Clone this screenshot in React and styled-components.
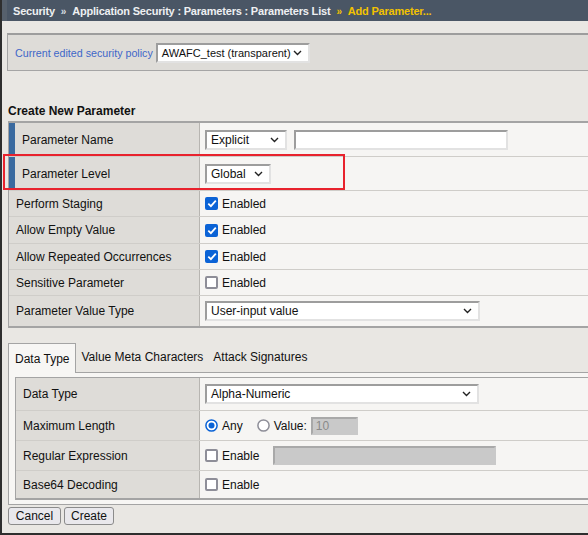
import React from 'react';
import styled, { createGlobalStyle } from 'styled-components';

const GlobalStyle = createGlobalStyle`
  html, body {
    margin: 0;
    padding: 0;
    background: #e9e7e3;
    font-family: "Liberation Sans", Arial, sans-serif;
    font-size: 12px;
    color: #111;
  }
`;

// Page frame with the dark window edges
const Page = styled.div`
  box-sizing: border-box;
  height: 535px;
  border-left: 2px solid #2e2e2e;
  border-bottom: 2px solid #2e2e2e;
  overflow: hidden;
`;

// Breadcrumb header bar
const Header = styled.header`
  display: flex;
  align-items: center;
  height: 21px;
  padding-left: 6px;
  background-color: #4a5665;
  border-left: 5px solid #56606c;
  color: #eef0f2;
  font-size: 11px;
  font-weight: bold;
  letter-spacing: -0.2px;
  white-space: nowrap;
`;

const Sep = styled.span`
  font-size: 10px;
  margin: 2px 6px 0 6px;
  color: ${(p) => (p.$hot ? '#f2c200' : '#d8dce0')};
`;

const Crumb = styled.span`
  color: ${(p) => (p.$hot ? '#f2c200' : '#eef0f2')};
`;

// Current policy bar
const PolicyBar = styled.div`
  display: flex;
  align-items: center;
  gap: 3px;
  box-sizing: border-box;
  height: 38px;
  margin: 12px 0 0 5px;
  padding-left: 7px;
  background-color: #dedcd8;
  border-top: 2px solid #9d9d9d;
  border-left: 1px solid #a5a5a5;
  border-bottom: 1px solid #a5a5a5;
`;

const PolicyLabel = styled.span`
  color: #3f67c8;
  font-size: 10.7px;
  padding-top: 1px;
`;

// Dropdown looking control
const Select = styled.div`
  display: flex;
  align-items: center;
  justify-content: space-between;
  box-sizing: border-box;
  width: ${(p) => p.$w}px;
  height: 20px;
  padding: 0 6px 0 4px;
  background: #fff;
  border: 2px solid;
  border-color: #9d9d9d #e2e2e2 #e2e2e2 #9d9d9d;
  color: #111;
  font-size: ${(p) => p.$fs || 12}px;
  white-space: nowrap;
  & svg {
    flex-shrink: 0;
  }
`;

const TextBox = styled.div`
  box-sizing: border-box;
  width: ${(p) => p.$w}px;
  height: ${(p) => p.$h || 20}px;
  margin-left: ${(p) => p.$ml || 0}px;
  padding-left: 3px;
  display: flex;
  align-items: center;
  background: ${(p) => (p.$disabled ? '#c9c9c9' : '#fff')};
  color: #8a8a8a;
  border: 2px solid;
  border-color: ${(p) =>
    p.$disabled ? '#a9a9a9 #c9c9c9 #c9c9c9 #a9a9a9' : '#9d9d9d #e2e2e2 #e2e2e2 #9d9d9d'};
`;

const Chevron = () => (
  <svg width="9" height="6" viewBox="0 0 9 6">
    <path d="M1 1 L4.5 4.5 L8 1" fill="none" stroke="#222" strokeWidth="1.4" />
  </svg>
);

const SectionTitle = styled.h2`
  margin: 31px 0 0 6px;
  font-size: 12px;
  font-weight: bold;
  line-height: 19px;
`;

const TableWrap = styled.div`
  position: relative;
  margin-left: 6px;
`;

const Grid = styled.div`
  border-top: ${(p) => p.$topW || 2}px solid #a4a4a4;
  border-left: 1px solid #a4a4a4;
  border-bottom: 2px solid #a4a4a4;
`;

const Row = styled.div`
  display: grid;
  grid-template-columns: ${(p) => p.$col}px 1fr;
  box-sizing: border-box;
  height: ${(p) => p.$h}px;
  & + & {
    border-top: 1px solid #cfcdc9;
  }
`;

const Label = styled.div`
  display: flex;
  align-items: center;
  padding-left: 7px;
  background-color: #dedcd8;
  border-right: 1px solid #b7b5b1;
  border-left: ${(p) => (p.$accent ? '6px solid #3a6a9f' : 'none')};
  white-space: nowrap;
`;

const Value = styled.div`
  display: flex;
  align-items: center;
  gap: 4px;
  padding-left: 5px;
  background-color: #f6f5f3;
  white-space: nowrap;
`;

const Highlight = styled.div`
  position: absolute;
  left: -5px;
  top: 33px;
  width: 342px;
  height: 36px;
  box-sizing: border-box;
  border: 2px solid #e8222d;
  pointer-events: none;
`;

const Box = styled.span`
  display: inline-flex;
  align-items: center;
  justify-content: center;
  box-sizing: border-box;
  width: 13px;
  height: 13px;
  border-radius: 2px;
  background: ${(p) => (p.$on ? '#0b63d6' : '#fff')};
  border: ${(p) => (p.$on ? 'none' : '2px solid #8e8e98')};
`;

const Check = ({ on }) => (
  <Box $on={on}>
    {on && (
      <svg width="10" height="9" viewBox="0 0 10 9">
        <path d="M1.3 4.6 L3.9 7.1 L8.8 1.6" fill="none" stroke="#fff" strokeWidth="1.8" />
      </svg>
    )}
  </Box>
);

const Radio = ({ on }) => (
  <svg width="13" height="13" viewBox="0 0 13 13">
    <circle cx="6.5" cy="6.5" r="5.6" fill="#fff" stroke={on ? '#0b63d6' : '#8e8e98'} strokeWidth="1.5" />
    {on && <circle cx="6.5" cy="6.5" r="3" fill="#0b63d6" />}
  </svg>
);

const Option = styled.span`
  margin-right: ${(p) => p.$mr || 0}px;
`;

// Tabs
const TabBar = styled.div`
  display: flex;
  align-items: flex-end;
  margin: 15px 0 0 6px;
  height: 29px;
`;

const Tab = styled.div`
  display: flex;
  align-items: center;
  box-sizing: border-box;
  height: ${(p) => (p.$active ? 30 : 29)}px;
  padding: ${(p) => (p.$active ? '0 6px 0 6px' : '0 5px 2px 5px')};
  margin-bottom: ${(p) => (p.$active ? -1 : 0)}px;
  background: ${(p) => (p.$active ? '#f7f6f4' : 'transparent')};
  border: ${(p) => (p.$active ? '1px solid #a4a4a4' : 'none')};
  border-bottom: none;
  position: relative;
  z-index: 1;
`;

const Panel = styled.div`
  margin-left: 6px;
  padding: 4px 0 4px 6px;
  background: #f7f6f4;
  border-top: 1px solid #a4a4a4;
  border-left: 1px solid #a4a4a4;
  border-bottom: 1px solid #a4a4a4;
`;

const Buttons = styled.div`
  display: flex;
  gap: 3px;
  margin: 2px 0 0 6px;
`;

const Button = styled.button`
  box-sizing: border-box;
  width: ${(p) => p.$w}px;
  height: 18px;
  padding: 0;
  font-family: "Liberation Sans", Arial, sans-serif;
  font-size: 12px;
  color: #111;
  background: #e9e8ec;
  border: 1px solid #8b8b8b;
  border-radius: 3px;
`;

const mainRows = [
  { label: 'Parameter Name', h: 33, accent: true, kind: 'name' },
  { label: 'Parameter Level', h: 34, accent: true, kind: 'level' },
  { label: 'Perform Staging', h: 26, kind: 'check', on: true },
  { label: 'Allow Empty Value', h: 27, kind: 'check', on: true },
  { label: 'Allow Repeated Occurrences', h: 26, kind: 'check', on: true },
  { label: 'Sensitive Parameter', h: 26, kind: 'check', on: false },
  { label: 'Parameter Value Type', h: 31, kind: 'type' },
];

function MainValue({ row }) {
  switch (row.kind) {
    case 'name':
      return (
        <>
          <Select $w={82}>Explicit <Chevron /></Select>
          <TextBox $w={214} $ml={3} />
        </>
      );
    case 'level':
      return <Select $w={66}>Global <Chevron /></Select>;
    case 'type':
      return <Select $w={275}>User-input value <Chevron /></Select>;
    default:
      return (
        <>
          <Check on={row.on} />
          <span>Enabled</span>
        </>
      );
  }
}

export default function App() {
  return (
    <>
      <GlobalStyle />
      <Page>
        <Header>
          <Crumb>Security</Crumb>
          <Sep>»</Sep>
          <Crumb>Application Security : Parameters : Parameters List</Crumb>
          <Sep $hot>»</Sep>
          <Crumb $hot>Add Parameter...</Crumb>
        </Header>

        <PolicyBar>
          <PolicyLabel>Current edited security policy</PolicyLabel>
          <Select $w={154} $fs={11}>AWAFC_test (transparent) <Chevron /></Select>
        </PolicyBar>

        <SectionTitle>Create New Parameter</SectionTitle>

        <TableWrap>
          <Grid>
            {mainRows.map((row) => (
              <Row key={row.label} $col={191} $h={row.h}>
                <Label $accent={row.accent}>{row.label}</Label>
                <Value>
                  <MainValue row={row} />
                </Value>
              </Row>
            ))}
          </Grid>
          <Highlight />
        </TableWrap>

        <TabBar>
          <Tab $active>Data Type</Tab>
          <Tab>Value Meta Characters</Tab>
          <Tab>Attack Signatures</Tab>
        </TabBar>
        <Panel>
          <Grid $topW={1}>
            <Row $col={184} $h={32}>
              <Label>Data Type</Label>
              <Value>
                <Select $w={274}>Alpha-Numeric <Chevron /></Select>
              </Value>
            </Row>
            <Row $col={184} $h={30}>
              <Label>Maximum Length</Label>
              <Value>
                <Radio on />
                <Option $mr={10}>Any</Option>
                <Radio />
                <span>Value:</span>
                <TextBox $w={47} $h={18} $disabled>10</TextBox>
              </Value>
            </Row>
            <Row $col={184} $h={30}>
              <Label>Regular Expression</Label>
              <Value>
                <Check on={false} />
                <Option $mr={10}>Enable</Option>
                <TextBox $w={223} $h={19} $disabled />
              </Value>
            </Row>
            <Row $col={184} $h={28}>
              <Label>Base64 Decoding</Label>
              <Value>
                <Check on={false} />
                <span>Enable</span>
              </Value>
            </Row>
          </Grid>
        </Panel>

        <Buttons>
          <Button $w={53}>Cancel</Button>
          <Button $w={50}>Create</Button>
        </Buttons>
      </Page>
    </>
  );
}
